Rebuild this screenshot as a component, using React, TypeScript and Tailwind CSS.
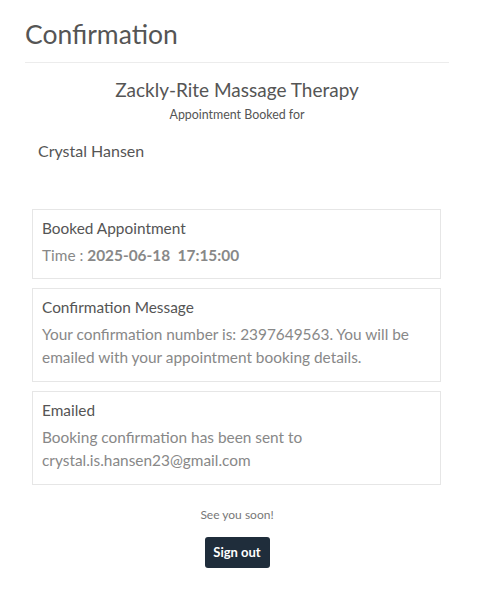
export default function App() {
  return (
    <div
      className="min-h-[601px] w-[480px] bg-white pl-[25px] pr-[31px] pt-[16px] text-[#555]"
      style={{ fontFamily: "Lato, 'Open Sans', sans-serif" }}
    >
      {/* Header */}
      <h1 className="text-[26.5px] leading-[36px] font-normal text-[#555]">Confirmation</h1>
      <div className="mt-[10px] border-t border-[#ececec]" />

      {/* Business */}
      <div className="mt-[14px] text-center">
        <h2 className="text-[19px] leading-[26px] text-[#555]">Zackly-Rite Massage Therapy</h2>
        <p className="mt-[4px] text-[12.4px] leading-[16px] text-[#555]">Appointment Booked for</p>
      </div>
      <p className="mt-[17px] pl-[13px] text-[16px] leading-[22px] text-[#555]">Crystal Hansen</p>

      {/* Cards */}
      <div className="mt-[47px] flex flex-col gap-[9px] pl-[7px] pr-[8px]">
        <div className="border border-[#e6e6e6] px-[9px] pt-[6px] pb-[11px]">
          <p className="mb-[4px] text-[15.4px] leading-[24px] text-[#555]">Booked Appointment</p>
          <p className="text-[15.4px] leading-[23px] text-[#888]">
            Time : <span className="font-bold">2025-06-18&nbsp; 17:15:00</span>
          </p>
        </div>
        <div className="border border-[#e6e6e6] px-[9px] pt-[6px] pb-[12px]">
          <p className="mb-[4px] text-[15.4px] leading-[24px] text-[#555]">Confirmation Message</p>
          <p className="text-[15.4px] leading-[23px] text-[#888]">
            Your confirmation number is: 2397649563. You will be emailed with your appointment booking details.
          </p>
        </div>
        <div className="border border-[#e6e6e6] px-[9px] pt-[6px] pb-[12px]">
          <p className="mb-[4px] text-[15.4px] leading-[24px] text-[#555]">Emailed</p>
          <p className="text-[15.4px] leading-[23px] text-[#888]">
            Booking confirmation has been sent to
            <br />
            crystal.is.hansen23@gmail.com
          </p>
        </div>
      </div>

      {/* Footer */}
      <div className="mt-[22px] flex flex-col items-center">
        <p className="text-[12px] leading-[16px] text-[#777]">See you soon!</p>
        <button className="mt-[14px] h-[31px] w-[65px] rounded-[3px] bg-[#1f2d3b] text-[13px] font-bold text-white">
          Sign out
        </button>
      </div>
    </div>
  );
}
